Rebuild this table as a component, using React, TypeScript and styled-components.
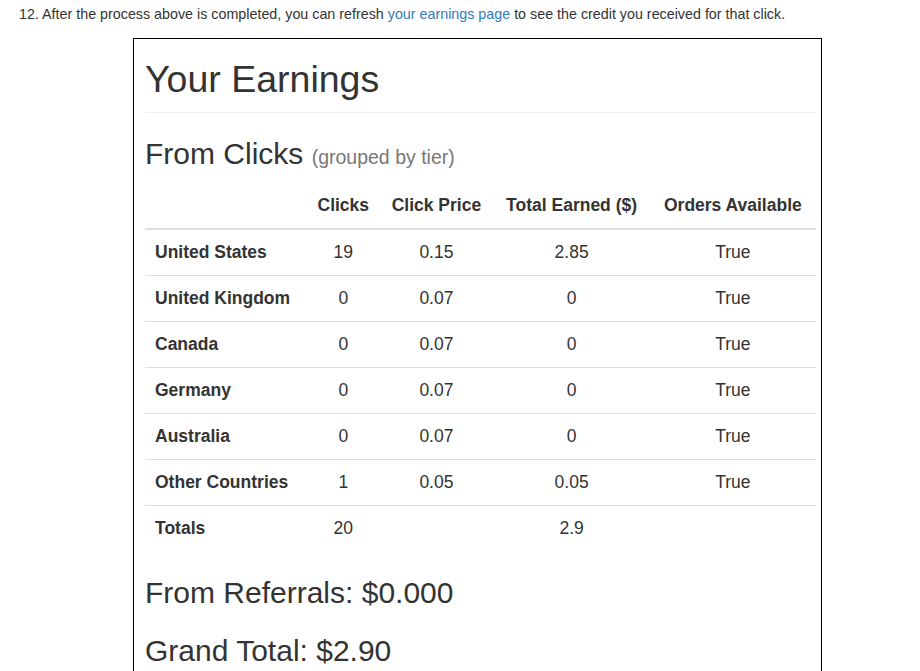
import React from "react";
import styled, { createGlobalStyle } from "styled-components";

const GlobalStyle = createGlobalStyle`
  html, body {
    margin: 0;
    padding: 0;
    background: #fff;
  }
  body {
    font-family: "Liberation Sans", Arial, Helvetica, sans-serif;
    font-size: 14px;
    line-height: 1.42857;
    color: #333;
  }
`;

const Page = styled.div`
  padding: 4px 0 0 19px;
`;

const Step = styled.p`
  margin: 0;
  font-size: 14.3px;
  line-height: 20px;
`;

const Link = styled.a`
  color: #337ab7;
  text-decoration: none;
`;

const Panel = styled.div`
  margin: 14px 0 0 114px;
  width: 689px;
  border: 1px solid #000;
  border-bottom: none;
  padding: 0 5px 20px 11px;
  box-sizing: border-box;
`;

const Title = styled.h1`
  margin: 20px 0 0;
  padding-bottom: 12px;
  font-size: 37.5px;
  font-weight: 500;
  line-height: 1.1;
  border-bottom: 1px solid #eee;
`;

const SubTitle = styled.h2<{ $top?: number }>`
  margin: ${(p) => p.$top ?? 24}px 0 13px;
  font-size: 30px;
  font-weight: 500;
  line-height: 1.1;
`;

const Small = styled.small`
  font-size: 65%;
  font-weight: 400;
  color: #777;
`;

const Table = styled.table`
  width: 100%;
  border-collapse: collapse;
  table-layout: fixed;
  font-size: 17.5px;
  line-height: 25px;
`;

const HeadCell = styled.th<{ $w: number; $left?: boolean }>`
  box-sizing: border-box;
  width: ${(p) => p.$w}px;
  padding: 10px;
  text-align: ${(p) => (p.$left ? "left" : "center")};
  font-weight: 700;
  border-bottom: 2px solid #ddd;
  white-space: nowrap;
`;

const Row = styled.tr<{ $first?: boolean }>`
  & > td {
    border-top: ${(p) => (p.$first ? "none" : "1px solid #ddd")};
  }
`;

const Cell = styled.td<{ $label?: boolean }>`
  padding: 10px;
  text-align: ${(p) => (p.$label ? "left" : "center")};
  font-weight: ${(p) => (p.$label ? 700 : 400)};
  white-space: nowrap;
`;

const rows = [
  ["United States", "19", "0.15", "2.85", "True"],
  ["United Kingdom", "0", "0.07", "0", "True"],
  ["Canada", "0", "0.07", "0", "True"],
  ["Germany", "0", "0.07", "0", "True"],
  ["Australia", "0", "0.07", "0", "True"],
  ["Other Countries", "1", "0.05", "0.05", "True"],
  ["Totals", "20", "", "2.9", ""],
];

export default function App() {
  return (
    <>
      <GlobalStyle />
      <Page>
        <Step>
          12. After the process above is completed, you can refresh{" "}
          <Link href="#">your earnings page</Link> to see the credit you
          received for that click.
        </Step>
        <Panel>
          <Title>Your Earnings</Title>
          <SubTitle>
            From Clicks <Small>(grouped by tier)</Small>
          </SubTitle>
          <Table>
            <thead>
              <tr>
                <HeadCell $w={162} $left></HeadCell>
                <HeadCell $w={72}>Clicks</HeadCell>
                <HeadCell $w={114}>Click Price</HeadCell>
                <HeadCell $w={156}>Total Earned ($)</HeadCell>
                <HeadCell $w={166}>Orders Available</HeadCell>
              </tr>
            </thead>
            <tbody>
              {rows.map((r, i) => (
                <Row key={r[0]} $first={i === 0}>
                  {r.map((c, j) => (
                    <Cell key={j} $label={j === 0}>
                      {c}
                    </Cell>
                  ))}
                </Row>
              ))}
            </tbody>
          </Table>
          <SubTitle $top={25}>From Referrals: $0.000</SubTitle>
          <SubTitle $top={25}>Grand Total: $2.90</SubTitle>
        </Panel>
      </Page>
    </>
  );
}
